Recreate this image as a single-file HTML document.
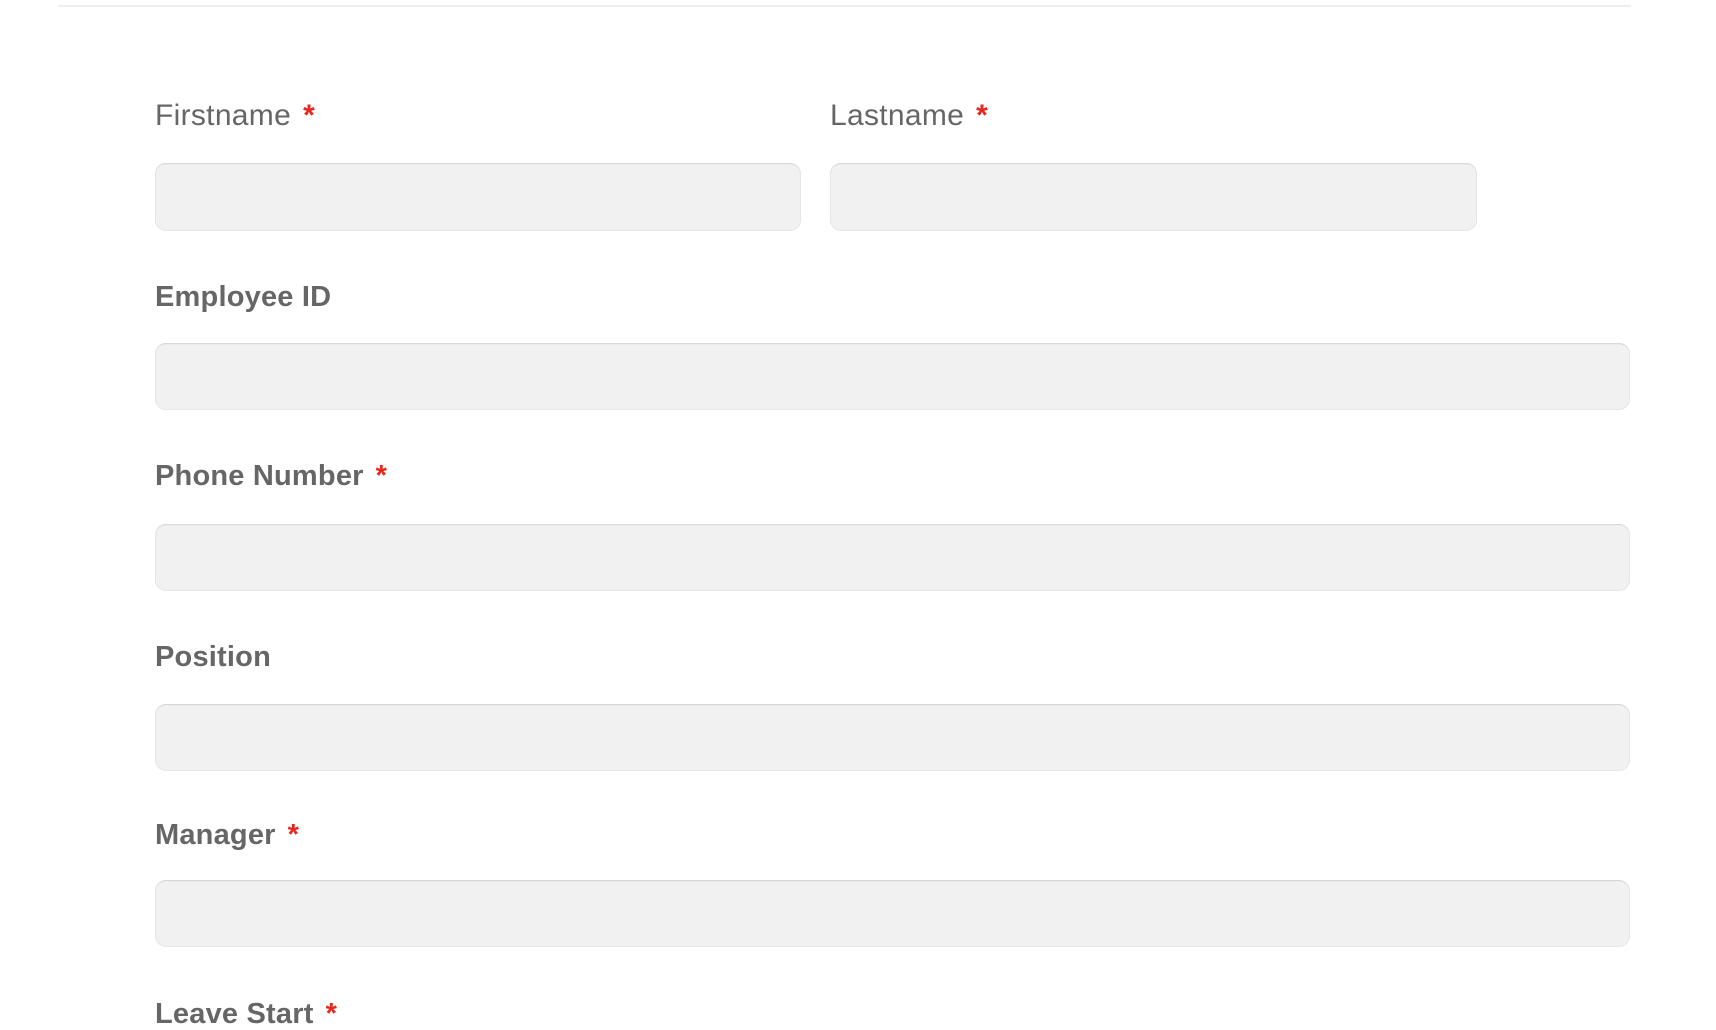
<!DOCTYPE html>
<html><head><style>
html,body{margin:0;padding:0;width:1716px;height:1004px;overflow:hidden;background:#fff;font-family:"Liberation Sans",sans-serif;}
.line{position:absolute;left:58px;top:5px;width:1573px;height:2px;background:#eeeeee;}
.lab{position:absolute;font-size:29px;line-height:28px;color:#666;white-space:nowrap;letter-spacing:0.2px;}
.r{font-size:30px;letter-spacing:0.3px;}
.b{font-weight:bold;}
.s{color:#e8261c;margin-left:12px;font-weight:bold;}
.in{position:absolute;background:#f1f1f1;border-radius:11px;box-shadow:inset 0 2px 1px -1px #d6d6d6, inset 0 0 0 1px #e6e6e6;}
</style></head><body>
<div class="line"></div>
<div class="lab r" style="left:155px;top:102px">Firstname<span class="s">*</span></div>
<div class="lab r" style="left:830px;top:102px">Lastname<span class="s">*</span></div>
<div class="in" style="left:155px;top:163px;width:646px;height:68px"></div>
<div class="in" style="left:830px;top:163px;width:647px;height:68px"></div>
<div class="lab b" style="left:155px;top:283px">Employee ID</div>
<div class="in" style="left:155px;top:343px;width:1475px;height:67px"></div>
<div class="lab b" style="left:155px;top:462px">Phone Number<span class="s">*</span></div>
<div class="in" style="left:155px;top:524px;width:1475px;height:67px"></div>
<div class="lab b" style="left:155px;top:643px">Position</div>
<div class="in" style="left:155px;top:704px;width:1475px;height:67px"></div>
<div class="lab b" style="left:155px;top:821px">Manager<span class="s">*</span></div>
<div class="in" style="left:155px;top:880px;width:1475px;height:67px"></div>
<div class="lab b" style="left:155px;top:1000px">Leave Start<span class="s">*</span></div>
</body></html>
